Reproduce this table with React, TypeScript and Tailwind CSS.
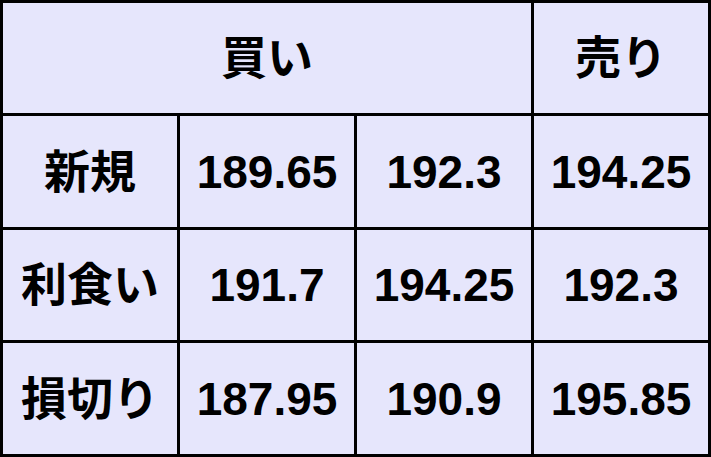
import React from "react";

const font = { fontFamily: '"Liberation Sans", Arial, "Noto Sans CJK JP", sans-serif' };

function Cell({ children, className = "" }: { children: React.ReactNode; className?: string }) {
  return (
    <div className={`flex items-center justify-center bg-[#e6e6fc] text-[46px] font-bold text-black leading-none ${className}`}>
      {children}
    </div>
  );
}

export default function App() {
  const rows: [string, string, string, string][] = [
    ["新規", "189.65", "192.3", "194.25"],
    ["利食い", "191.7", "194.25", "192.3"],
    ["損切り", "187.95", "190.9", "195.85"],
  ];
  return (
    <div
      className="grid h-[457px] w-[711px] grid-cols-[174px_174px_174px_174px] grid-rows-[110px_111px_110px_111px] gap-[3px] bg-black p-[3px]"
      style={font}
    >
      <Cell className="col-span-3">買い</Cell>
      <Cell>売り</Cell>
      {rows.map((r) =>
        r.map((c, i) => <Cell key={r[0] + i}>{c}</Cell>)
      )}
    </div>
  );
}
